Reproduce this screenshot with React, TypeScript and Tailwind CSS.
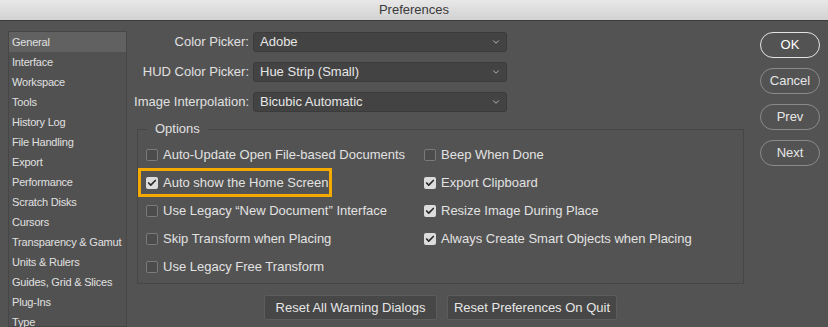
import { Check, ChevronDown } from 'lucide-react'

const sections = [
  'General',
  'Interface',
  'Workspace',
  'Tools',
  'History Log',
  'File Handling',
  'Export',
  'Performance',
  'Scratch Disks',
  'Cursors',
  'Transparency & Gamut',
  'Units & Rulers',
  'Guides, Grid & Slices',
  'Plug-Ins',
  'Type',
]

const pickers = [
  { label: 'Color Picker:', value: 'Adobe' },
  { label: 'HUD Color Picker:', value: 'Hue Strip (Small)' },
  { label: 'Image Interpolation:', value: 'Bicubic Automatic' },
]

const leftOptions = [
  { label: 'Auto-Update Open File-based Documents', checked: false },
  { label: 'Auto show the Home Screen', checked: true, marked: true },
  { label: 'Use Legacy \u201CNew Document\u201D Interface', checked: false },
  { label: 'Skip Transform when Placing', checked: false },
  { label: 'Use Legacy Free Transform', checked: false },
]

const rightOptions = [
  { label: 'Beep When Done', checked: false },
  { label: 'Export Clipboard', checked: true },
  { label: 'Resize Image During Place', checked: true },
  { label: 'Always Create Smart Objects when Placing', checked: true },
]

const CheckBox = ({ checked }: { checked: boolean }) =>
  checked ? (
    <span className="w-3 h-3 rounded-[2px] bg-[#dcdcdc] flex items-center justify-center">
      <Check className="w-[10px] h-[10px] text-[#2a2a2a]" strokeWidth={4} />
    </span>
  ) : (
    <span className="w-3 h-3 rounded-[2px] border border-[#7a7a7a] bg-[#4c4c4c]" />
  )

const OptionRow = ({ label, checked, marked }: { label: string; checked: boolean; marked?: boolean }) => (
  <div className="relative h-7 flex items-center gap-[5px]">
    {marked && (
      <div className="absolute left-[-8px] top-[-1px] w-[194px] h-[29px] border-[3px] border-[#f5aa00]" />
    )}
    <CheckBox checked={checked} />
    <span className="text-[13px] text-[#e2e2e2] whitespace-nowrap">{label}</span>
  </div>
)

export default function App() {
  return (
    <div
      className="w-[828px] h-[327px] bg-[#535353] overflow-hidden flex flex-col"
      style={{ fontFamily: '"Liberation Sans", Arial, sans-serif' }}
    >
      <div className="h-[21px] shrink-0 bg-gradient-to-b from-[#e8e8e8] to-[#d2d2d2] border-b border-[#3c3c3c] flex items-center justify-center">
        <span className="text-[13px] text-[#3a3a3a] font-medium">Preferences</span>
      </div>

      <div className="flex flex-1 min-h-0">
        {/* sidebar */}
        <div className="ml-2 mt-[10px] w-[119px] shrink-0 border border-[#464646] bg-[#515151]">
          {sections.map((s, i) => (
            <div
              key={s}
              className={`h-5 flex items-center pl-[3px] text-[11px] tracking-[-0.2px] text-[#e0e0e0] whitespace-nowrap ${i === 0 ? 'bg-[#616161]' : ''}`}
            >
              {s}
            </div>
          ))}
        </div>

        {/* main */}
        <div className="w-[633px] shrink-0 flex flex-col">
          <div className="mt-[11px] flex flex-col gap-[10px]">
            {pickers.map((p) => (
              <div key={p.label} className="flex items-center h-5">
                <span className="w-[122px] text-right text-[13px] text-[#e0e0e0] whitespace-nowrap">{p.label}</span>
                <div className="ml-1 w-[254px] h-5 rounded-[3px] bg-[#434343] border border-[#3b3b3b] flex items-center justify-between pl-[6px] pr-[5px]">
                  <span className="text-[13px] text-[#e6e6e6]">{p.value}</span>
                  <ChevronDown className="w-[10px] h-[10px] text-[#c8c8c8]" strokeWidth={2} />
                </div>
              </div>
            ))}
          </div>

          <fieldset className="ml-[10px] mt-[9px] w-[607px] border border-[#464646] pl-2 pb-[2px]">
            <legend className="ml-[1px] px-[8px] text-[13px] text-[#e0e0e0] leading-4">Options</legend>
            <div className="flex mt-[4px]">
              <div className="w-[278px] flex flex-col">
                {leftOptions.map((o) => (
                  <OptionRow key={o.label} {...o} />
                ))}
              </div>
              <div className="flex flex-col">
                {rightOptions.map((o) => (
                  <OptionRow key={o.label} {...o} />
                ))}
              </div>
            </div>
          </fieldset>

          <div className="ml-[10px] w-[607px] mt-[11px] flex justify-center gap-[10px]">
            <button className="w-[173px] h-[25px] bg-[#474747] border border-[#5c5c5c] rounded-[2px] text-[13px] text-[#e6e6e6]">
              Reset All Warning Dialogs
            </button>
            <button className="w-[170px] h-[25px] bg-[#474747] border border-[#5c5c5c] rounded-[2px] text-[13px] text-[#e6e6e6]">
              Reset Preferences On Quit
            </button>
          </div>
        </div>

        {/* dialog buttons */}
        <div className="mt-[11px] flex flex-col gap-[10px]">
          <button className="w-[60px] h-[26px] rounded-full border border-[#e4e4e4] text-[13px] text-white">OK</button>
          <button className="w-[60px] h-[26px] rounded-full border border-[#8a8a8a] text-[13px] text-[#e6e6e6]">Cancel</button>
          <button className="w-[60px] h-[26px] rounded-full border border-[#8a8a8a] text-[13px] text-[#e6e6e6]">Prev</button>
          <button className="w-[60px] h-[26px] rounded-full border border-[#8a8a8a] text-[13px] text-[#e6e6e6]">Next</button>
        </div>
      </div>
    </div>
  )
}
